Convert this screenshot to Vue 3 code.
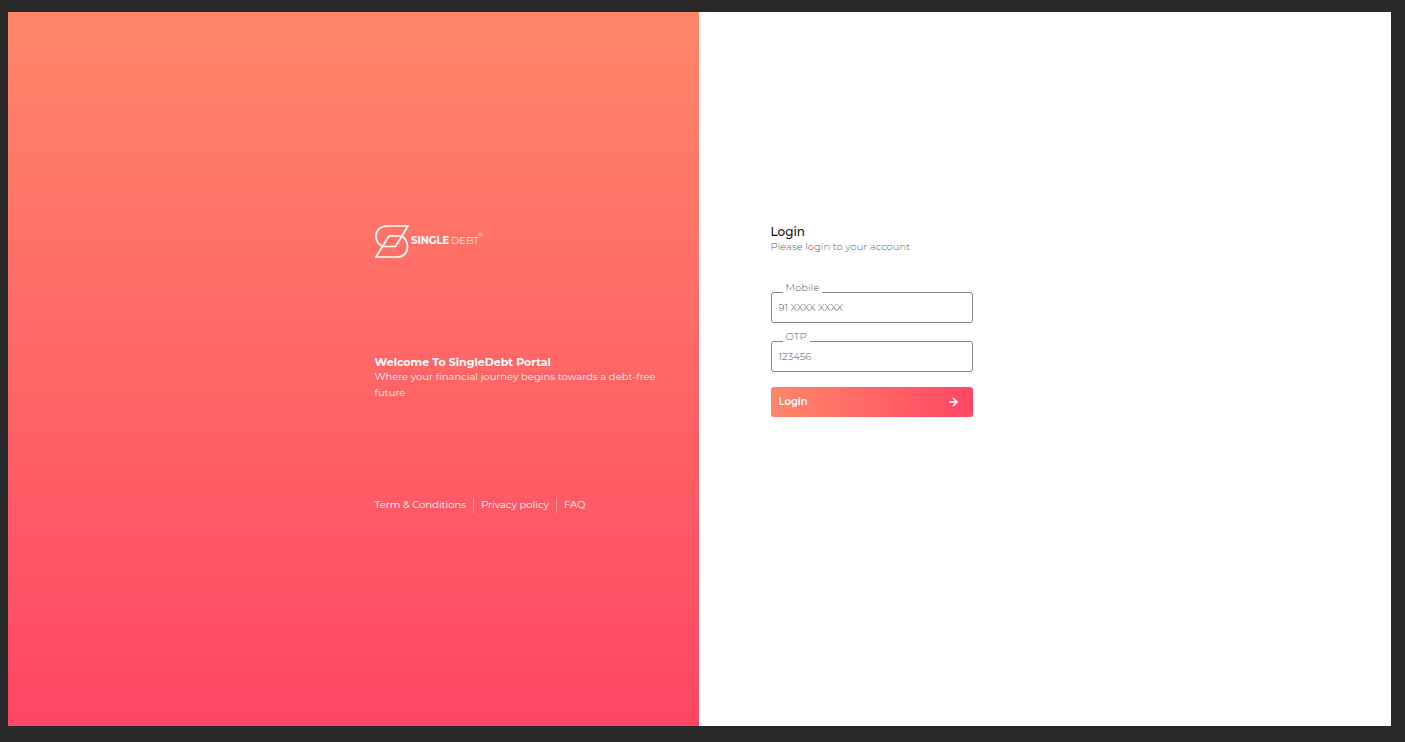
<script setup>
import { ref } from 'vue'

const mobile = ref('')
const otp = ref('')
</script>

<template>
  <main class="portal">
    <section class="brand">
      <div class="brand-content">
        <svg class="logo" viewBox="0 0 110 34" role="img" aria-label="SingleDebt">
          <g fill="none" stroke="#fff" stroke-width="1.7" stroke-linejoin="round">
            <path d="M20.500 21.500L33 1H12C5.500 1 1 5.500 1 11C1 15.500 3.500 19.500 7.500 21.500H20.500" />
            <path d="M14 11L1 32H22C28.500 32 32.500 27.500 32.500 22C32.500 17.500 30.500 13.500 27 11H14" />
          </g>
          <text class="single" x="36" y="19">SINGLE</text>
          <text class="debt" x="76" y="19">DEBT</text>
          <text class="registered" x="103" y="12">®</text>
        </svg>
        <div class="welcome">
          <h1>Welcome To SingleDebt Portal</h1>
          <p>Where your financial journey begins towards a debt-free future</p>
        </div>
        <nav class="links">
          <a href="#terms">Term &amp; Conditions</a>
          <a href="#privacy">Privacy policy</a>
          <a href="#faq">FAQ</a>
        </nav>
      </div>
    </section>
    <section class="access">
      <form class="login" @submit.prevent>
        <h2>Login</h2>
        <p>Please login to your account</p>
        <div class="field">
          <label for="mobile">Mobile</label>
          <input id="mobile" v-model="mobile" type="tel" placeholder="91 XXXX XXXX" />
        </div>
        <div class="field">
          <label for="otp">OTP</label>
          <input id="otp" v-model="otp" type="text" inputmode="numeric" placeholder="123456" />
        </div>
        <button type="submit">
          <span>Login</span>
          <svg viewBox="0 0 10 10" aria-hidden="true">
            <path d="M1 5H9M5 1L9 5L5 9" fill="none" stroke="currentColor" stroke-width="1.600" />
          </svg>
        </button>
      </form>
    </section>
  </main>
</template>

<style>
body {
  background: #292929;
}
</style>

<style scoped>
.portal {
  box-sizing: border-box;
  min-height: 100vh;
  padding: 12px 14px 16px 8px;
  display: grid;
  grid-template-columns: calc(50% - 1px) 1fr;
  font-family: Montserrat, Inter, sans-serif;
  font-size: 10px;
  line-height: 16px;
}
h1,
h2,
p {
  margin: 0;
}
.brand,
.access {
  display: flex;
  align-items: center;
}
.brand {
  justify-content: flex-end;
  padding-right: 32px;
  background: linear-gradient(#ff8669, #ff4664);
  color: #fff;
}
.brand-content,
.login {
  min-height: 288px;
}
.brand-content {
  width: 292px;
  display: flex;
  flex-direction: column;
  justify-content: space-between;
}
.logo {
  width: 110px;
  height: 34px;
}
.logo text {
  fill: #fff;
}
.single {
  font-size: 10px;
  font-weight: 700;
}
.debt {
  font-size: 10px;
  font-weight: 300;
}
.logo .registered {
  font-size: 6px;
}
h1 {
  font-size: 11px;
  line-height: 14px;
  font-weight: 700;
}
.welcome p {
  color: #fff2f1;
}
.links {
  display: flex;
}
.links a {
  color: #fff;
  text-decoration: none;
}
.links a + a {
  margin-left: 7px;
  padding-left: 7px;
  border-left: 1px solid #ff9a9e;
}
.access {
  padding-left: 72px;
  background: #fff;
}
.login {
  width: 202px;
}
h2 {
  color: #111;
  font-size: 12px;
  line-height: 14px;
  font-weight: 500;
}
.login p {
  color: #606068;
  margin-bottom: 37px;
}
.field {
  position: relative;
  margin-bottom: 18px;
}
.field label {
  position: absolute;
  top: -12px;
  left: 12px;
  padding: 0 3px;
  background: #fff;
  color: #606068;
}
.field input {
  display: block;
  box-sizing: border-box;
  width: 100%;
  height: 31px;
  padding: 0 7px;
  border: 1px solid #858589;
  border-radius: 3px;
  background: #fff;
  color: #555;
  font: inherit;
}
.login p,
.field label,
.field input {
  font-weight: 300;
}
.field input::placeholder {
  color: #55555c;
  opacity: 1;
}
button {
  display: flex;
  align-items: center;
  justify-content: space-between;
  width: 100%;
  height: 30px;
  margin-top: -3px;
  padding: 0 15px 0 8px;
  border: 0;
  border-radius: 3px;
  background: linear-gradient(90deg, #ff8669, #ff4664);
  color: #fff;
  font: inherit;
  font-weight: 600;
}
button svg {
  width: 10px;
  height: 10px;
}
</style>
